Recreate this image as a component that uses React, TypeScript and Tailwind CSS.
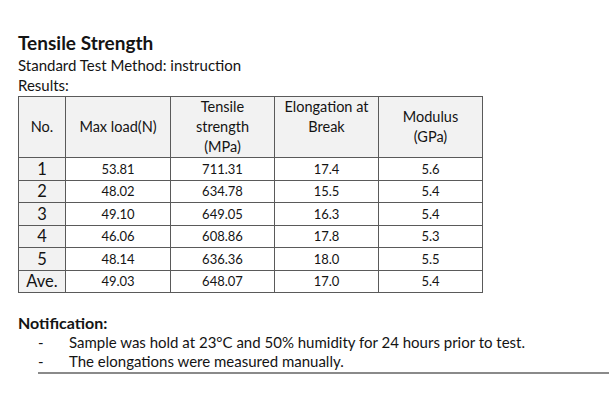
const rows = [
  ["1", "53.81", "711.31", "17.4", "5.6"],
  ["2", "48.02", "634.78", "15.5", "5.4"],
  ["3", "49.10", "649.05", "16.3", "5.4"],
  ["4", "46.06", "608.86", "17.8", "5.3"],
  ["5", "48.14", "636.36", "18.0", "5.5"],
  ["Ave.", "49.03", "648.07", "17.0", "5.4"],
];

const cell = "border border-[#5a5a5a] text-center p-0";

export default function App() {
  return (
    <div
      className="w-[609px] h-[403px] bg-white text-[#141414] overflow-hidden"
      style={{ fontFamily: "Lato, 'Open Sans', sans-serif" }}
    >
      <div className="pl-[18px] pt-[31px]">
        <h1 className="text-[19px] font-bold leading-[24px]">Tensile Strength</h1>
        <p className="text-[15px] leading-[20px]">Standard Test Method: instruction</p>
        <p className="text-[15px] leading-[20px]">Results:</p>

        <table className="mt-[1px] border-collapse text-[13px] table-fixed">
          <colgroup>
            <col className="w-[47px]" />
            <col className="w-[105px]" />
            <col className="w-[104px]" />
            <col className="w-[104px]" />
            <col className="w-[104px]" />
          </colgroup>
          <thead>
            <tr className="h-[61px] bg-[#f2f2f2] leading-[20px] text-[14.5px]">
              <th className={`${cell} font-normal`}>No.</th>
              <th className={`${cell} font-normal`}>Max load(N)</th>
              <th className={`${cell} font-normal`}>
                Tensile
                <br />
                strength
                <br />
                (MPa)
              </th>
              <th className={`${cell} font-normal align-top`}>
                Elongation at
                <br />
                Break
              </th>
              <th className={`${cell} font-normal`}>
                Modulus
                <br />
                (GPa)
              </th>
            </tr>
          </thead>
          <tbody>
            {rows.map((r) => (
              <tr key={r[0]} className="h-[22.5px] leading-[20px]">
                <td className={`${cell} bg-[#f2f2f2] text-[16.5px]`}>{r[0]}</td>
                <td className={cell}>{r[1]}</td>
                <td className={cell}>{r[2]}</td>
                <td className={cell}>{r[3]}</td>
                <td className={cell}>{r[4]}</td>
              </tr>
            ))}
          </tbody>
        </table>

        <div className="mt-[20px]">
          <p className="text-[16px] font-bold leading-[20px]">Notification:</p>
          <ul className="text-[15px] leading-[19px] ml-[20px] w-[571px] border-b-2 border-[#8a8a8a] pb-[1px]">
            <li className="flex">
              <span className="w-[31px]">-</span>
              <span>Sample was hold at 23°C and 50% humidity for 24 hours prior to test.</span>
            </li>
            <li className="flex">
              <span className="w-[31px]">-</span>
              <span>The elongations were measured manually.</span>
            </li>
          </ul>
        </div>
      </div>
    </div>
  );
}
